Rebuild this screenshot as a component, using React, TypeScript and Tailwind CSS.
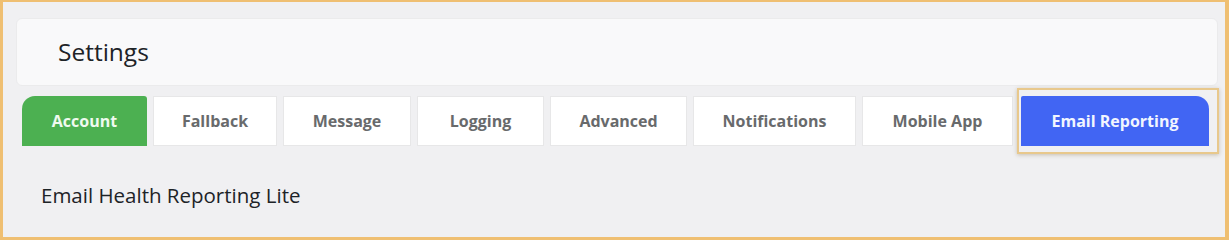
const tabs = [
  { label: "Account", w: "w-[125px]", kind: "green" },
  { label: "Fallback", w: "w-[124px]", kind: "plain" },
  { label: "Message", w: "w-[128px]", kind: "plain" },
  { label: "Logging", w: "w-[127px]", kind: "plain" },
  { label: "Advanced", w: "w-[137px]", kind: "plain" },
  { label: "Notifications", w: "w-[163px]", kind: "plain" },
  { label: "Mobile App", w: "w-[151px]", kind: "plain" },
];

export default function App() {
  return (
    <div
      className="w-[1229px] h-[240px] border-[3px] border-t-2 border-r-[4px] border-[#efbf72] bg-[#f0f0f2] overflow-hidden"
      style={{ fontFamily: '"Open Sans", "Noto Sans", sans-serif' }}
    >
      {/* page header */}
      <div className="pt-[16px] pl-[13px] pr-[7px]">
        <div className="h-[68px] rounded-md bg-[#f9f9fa] border border-[#ebebec] flex items-center pl-[41px]">
          <h1 className="text-[24.5px] leading-none text-[#1d2327]">Settings</h1>
        </div>
      </div>

      {/* tabs */}
      <div className="flex items-stretch gap-[6px] mt-[10px] ml-[19px] h-[50px]">
        {tabs.map((t) =>
          t.kind === "green" ? (
            <div
              key={t.label}
              className={`${t.w} flex items-center justify-center rounded-tl-[13px] rounded-tr-[3px] bg-[#4cb051] text-[16px] font-bold text-[#effaef]`}
            >
              {t.label}
            </div>
          ) : (
            <div
              key={t.label}
              className={`${t.w} flex items-center justify-center bg-white border border-[#e7e7e8] text-[16px] font-bold text-[#686a6c]`}
            >
              {t.label}
            </div>
          )
        )}
        <div className="relative ml-[2px]">
          <span className="absolute -left-[4px] -top-[8px] -right-[10px] -bottom-[8px] border-2 border-[#e8c88c] shadow-[0_1px_4px_rgba(120,100,60,0.35)]" />
          <div className="relative w-[188px] h-full flex items-center justify-center rounded-tr-[13px] rounded-tl-[2px] bg-[#4165f3] text-[16px] font-bold text-[#f1f6ff]">
            Email Reporting
          </div>
        </div>
      </div>

      {/* section title */}
      <div className="mt-[35px] ml-[38px]">
        <h2 className="text-[20.5px] font-medium leading-[28px] text-[#1d2327]">
          Email Health Reporting Lite
        </h2>
      </div>
    </div>
  );
}
